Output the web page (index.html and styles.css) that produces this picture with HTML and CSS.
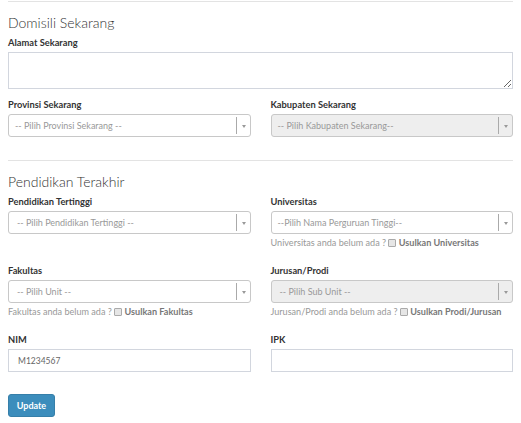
FILE: index.html
```html
<!DOCTYPE html>
<html>
<head>
<meta charset="utf-8">
<link rel="stylesheet" href="styles.css">
</head>
<body>
<div class="page">
  <div class="divider first"></div>
  <h3 class="section-title">Domisili Sekarang</h3>
  <div class="field">
    <label class="label">Alamat Sekarang</label>
    <textarea class="textarea"></textarea>
  </div>
  <div class="row r-first">
    <div class="field">
      <label class="label">Provinsi Sekarang</label>
      <div class="select"><span class="select-text">-- Pilih Provinsi Sekarang --</span><span class="select-arrow"></span></div>
    </div>
    <div class="field">
      <label class="label">Kabupaten Sekarang</label>
      <div class="select disabled"><span class="select-text">-- Pilih Kabupaten Sekarang--</span><span class="select-arrow"></span></div>
    </div>
  </div>

  <div class="divider second"></div>
  <h3 class="section-title">Pendidikan Terakhir</h3>
  <div class="row r-edu">
    <div class="field">
      <label class="label">Pendidikan Tertinggi</label>
      <div class="select"><span class="select-text wide">-- Pilih Pendidikan Tertinggi --</span><span class="select-arrow"></span></div>
    </div>
    <div class="field">
      <label class="label">Universitas</label>
      <div class="select"><span class="select-text">--Pilih Nama Perguruan Tinggi--</span><span class="select-arrow"></span></div>
      <div class="help">Universitas anda belum ada ? <span class="check"></span> <b>Usulkan Universitas</b></div>
    </div>
  </div>
  <div class="row r-next">
    <div class="field">
      <label class="label">Fakultas</label>
      <div class="select"><span class="select-text wide">-- Pilih Unit --</span><span class="select-arrow"></span></div>
      <div class="help">Fakultas anda belum ada ? <span class="check"></span> <b>Usulkan Fakultas</b></div>
    </div>
    <div class="field">
      <label class="label">Jurusan/Prodi</label>
      <div class="select disabled"><span class="select-text wide">-- Pilih Sub Unit --</span><span class="select-arrow"></span></div>
      <div class="help">Jurusan/Prodi anda belum ada ? <span class="check"></span> <b>Usulkan Prodi/Jurusan</b></div>
    </div>
  </div>
  <div class="row r-next">
    <div class="field">
      <label class="label">NIM</label>
      <input class="input" type="text" value="M1234567">
    </div>
    <div class="field">
      <label class="label">IPK</label>
      <input class="input" type="text" value="">
    </div>
  </div>
  <button class="btn">Update</button>
</div>
</body>
</html>
```

FILE: styles.css
```css
html, body {
  margin: 0;
  padding: 0;
  background: #fff;
}
body {
  font-family: Lato, "Open Sans", sans-serif;
  color: #333;
}
.page {
  padding: 0 8px;
}
.divider {
  height: 1px;
  background: #e3e3e3;
}
.divider.first {
  margin-top: 1px;
}
.divider.second {
  margin-top: 23px;
}
.section-title {
  margin: 13px 0 0;
  font-size: 14px;
  line-height: 16px;
  font-weight: 300;
  color: #333;
}
.field {
  display: flex;
  flex-direction: column;
  min-width: 0;
}
.section-title + .field,
.section-title + .row {
  margin-top: 6px;
}
.label {
  display: block;
  font-size: 9.3px;
  line-height: 12px;
  font-weight: 700;
  color: #333;
  margin-bottom: 3px;
}
.textarea {
  display: block;
  box-sizing: border-box;
  width: 100%;
  height: 37px;
  margin: 0;
  border: 1px solid #d2d6de;
  border-radius: 0;
  padding: 4px;
  font-family: inherit;
  resize: vertical;
  outline: none;
}
.row {
  display: grid;
  grid-template-columns: 1fr 1fr;
  column-gap: 20px;
  align-items: start;
}
.r-first {
  margin-top: 10px;
}
.r-next {
  margin-top: 16px;
}
.select {
  box-sizing: border-box;
  height: 23px;
  border: 1px solid #c8c8c8;
  border-radius: 3px;
  background: #fff;
  display: flex;
  align-items: stretch;
}
.select.disabled {
  background: #eee;
}
.select-text {
  flex: 1;
  min-width: 0;
  font-size: 9px;
  line-height: 21px;
  color: #999;
  padding-left: 6px;
  white-space: nowrap;
  overflow: hidden;
}
.select-text.wide {
  padding-left: 8px;
}
.select-arrow {
  width: 13px;
  border-left: 1px solid #aaa;
  margin: 2px 0;
  position: relative;
}
.select-arrow::after {
  content: "";
  position: absolute;
  left: 5px;
  top: 8px;
  border-left: 2.5px solid transparent;
  border-right: 2.5px solid transparent;
  border-top: 3px solid #999;
}
.help {
  margin-top: 3px;
  font-size: 9.1px;
  line-height: 12px;
  color: #999;
  white-space: nowrap;
}
.help b {
  color: #777;
  font-weight: 700;
}
.check {
  display: inline-block;
  width: 8px;
  height: 8px;
  box-sizing: border-box;
  border: 1px solid #aaa;
  background: #e6e6e6;
  border-radius: 1px;
  vertical-align: -1px;
}
.input {
  box-sizing: border-box;
  display: block;
  width: 100%;
  height: 23px;
  margin: 0;
  border: 1px solid #d2d6de;
  border-radius: 0;
  padding: 0 9px;
  font-family: inherit;
  font-size: 8.5px;
  color: #666;
  outline: none;
}
.btn {
  display: block;
  margin-top: 22px;
  width: 47px;
  height: 23px;
  padding: 0;
  background: #3c8dbc;
  border: 1px solid #367fa9;
  border-radius: 3px;
  color: #fff;
  font-family: inherit;
  font-size: 9px;
  font-weight: 700;
}
```
